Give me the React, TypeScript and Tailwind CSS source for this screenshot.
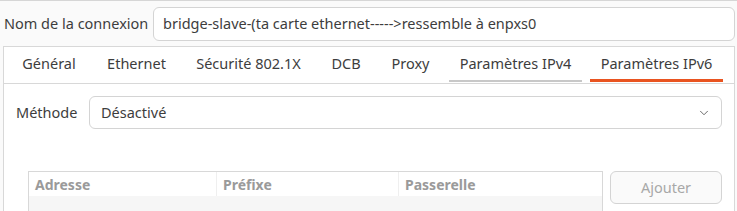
import { ChevronDown } from 'lucide-react'

const TABS = [
  { label: 'Général', w: 'w-[78px]', line: '' },
  { label: 'Ethernet', w: 'w-[81px]', line: '' },
  { label: 'Sécurité 802.1X', w: 'w-[127px]', line: '' },
  { label: 'DCB', w: 'w-[52px]', line: '' },
  { label: 'Proxy', w: 'w-[61px]', line: '' },
  { label: 'Paramètres IPv4', w: 'w-[133px]', line: 'h-[2px] bg-[#c8c8c8]' },
  { label: 'Paramètres IPv6', w: 'w-[133px]', line: 'h-[3px] bg-[#e95420]' },
]

export default function App() {
  return (
    <div
      className="w-[737px] h-[211px] overflow-hidden bg-[#fafafa] border-t border-[#d6d6d6] text-[#3d3d3d] text-[14.5px]"
      style={{ fontFamily: '"Noto Sans", "Open Sans", sans-serif' }}
    >
      {/* Connection name */}
      <div className="flex items-center h-[34px] mt-[6px] pl-[4px] pr-[2px]">
        <span className="w-[149px] shrink-0">Nom de la connexion</span>
        <div className="flex-1 h-[34px] flex items-center px-[9px] bg-white border border-[#d4d4d4] rounded-[6px]">
          bridge-slave-(ta carte ethernet-----&gt;ressemble à enpxs0
        </div>
      </div>

      {/* Notebook */}
      <div className="mt-[5px] ml-[3px] mr-[2px] h-[200px] bg-white border border-[#d8d8d8]">
        {/* Tab bar */}
        <div className="flex h-[37px] px-[2px] border-b border-[#d8d8d8]">
          {TABS.map((t) => (
            <div key={t.label} className={`${t.w} mx-1 flex flex-col shrink-0`}>
              <div className="flex-1 flex items-center justify-center pt-[1px]">
                {t.label}
              </div>
              <div className={`${t.line || 'h-[2px]'} mb-[1px]`} />
            </div>
          ))}
        </div>

        {/* Method */}
        <div className="flex items-center mt-[12px] pl-[12px] pr-[12px]">
          <span className="w-[73px] shrink-0">Méthode</span>
          <div className="flex-1 h-[33px] flex items-center justify-between pl-[11px] pr-[10px] bg-white border border-[#d4d4d4] rounded-[6px]">
            <span>Désactivé</span>
            <ChevronDown className="w-[14px] h-[14px] text-[#555]" strokeWidth={1.5} />
          </div>
        </div>

        {/* Addresses */}
        <div className="flex items-start mt-[42px] pl-[24px] pr-[12px] gap-[7px]">
          <div className="w-[575px] h-[60px] border border-[#d8d8d8] bg-white">
            <div className="flex h-[24px] font-bold text-[#9a9a9a] text-[14px]">
              <div className="w-[188px] pl-[6px] border-r border-[#efefef] flex items-center">Adresse</div>
              <div className="w-[182px] pl-[6px] border-r border-[#efefef] flex items-center">Préfixe</div>
              <div className="flex-1 pl-[6px] flex items-center">Passerelle</div>
            </div>
            <div className="h-[36px] bg-[#f6f6f6]" />
          </div>
          <div className="w-[112px] h-[33px] flex items-center justify-center border border-[#d4d4d4] rounded-[6px] bg-[#fafafa] text-[#a8a8a8]">
            Ajouter
          </div>
        </div>
      </div>
    </div>
  )
}
